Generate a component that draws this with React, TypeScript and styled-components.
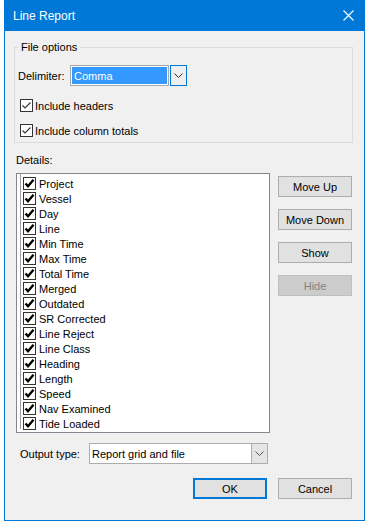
import React from 'react';
import styled, { createGlobalStyle } from 'styled-components';

const FONT = `"Liberation Sans", Arial, sans-serif`;

const Global = createGlobalStyle`
  html, body { margin: 0; padding: 0; background: #ffffff; }
  body { font-family: ${FONT}; font-size: 11px; color: #000; }
  * { box-sizing: border-box; }
`;

const Window = styled.div`
  margin-left: 4px;
  width: 361px;
  height: 521px;
  border: 1px solid #0078d7;
  border-top: none;
  background: #f0f0f0;
  display: flex;
  flex-direction: column;
`;

const TitleBar = styled.div`
  height: 31px;
  background: #0078d7;
  color: #fff;
  display: flex;
  align-items: center;
  justify-content: space-between;
  padding: 0 10px 0 8px;
  font-size: 12px;
  flex-shrink: 0;
`;

const Body = styled.div`
  display: flex;
  flex-direction: column;
  padding: 9px 11px 0 9px;
`;

const Group = styled.fieldset`
  margin: 0;
  border: 1px solid #dcdcdc;
  padding: 0 0 4px 3px;
  min-width: 0;
`;

const Legend = styled.legend`
  padding: 0 3px;
  line-height: 14px;
`;

const FieldRow = styled.div<{ $top: number; $indent?: number }>`
  display: flex;
  align-items: center;
  margin-top: ${(p) => p.$top}px;
  padding-left: ${(p) => p.$indent ?? 0}px;
`;

const Label = styled.span<{ $w: number }>`
  width: ${(p) => p.$w}px;
  flex-shrink: 0;
`;

const DelimCombo = styled.div`
  display: flex;
  height: 21px;
`;

const DelimField = styled.div`
  width: 99px;
  height: 21px;
  border: 1px solid #a8a8a8;
  background: #fff;
  padding: 1px;
`;

const Selection = styled.div`
  height: 100%;
  background: #3399ff;
  color: #fff;
  padding-left: 2px;
  display: flex;
  align-items: center;
`;

const DelimButton = styled.div`
  width: 17px;
  height: 21px;
  margin-left: 1px;
  border: 1px solid #0078d7;
  background: #eeeeee;
  display: flex;
  align-items: center;
  justify-content: center;
`;

const CheckRow = styled.label<{ $top: number }>`
  display: flex;
  align-items: center;
  gap: 2px;
  height: 15px;
  margin-top: ${(p) => p.$top}px;
  padding-left: 2px;
`;

const BoxWrap = styled.span`
  width: 13px;
  height: 13px;
  border: 1px solid #333;
  background: #fff;
  display: inline-flex;
  align-items: center;
  justify-content: center;
  flex-shrink: 0;
`;

const SectionLabel = styled.div`
  margin-top: 10px;
  padding-left: 2px;
  line-height: 14px;
`;

const DetailsRow = styled.div`
  display: flex;
  gap: 8px;
  margin-top: 6px;
  padding-left: 2px;
`;

const List = styled.div`
  width: 254px;
  height: 260px;
  border: 1px solid #828790;
  background: #fff;
  padding: 0 0 3px 3px;
`;

const ListInner = styled.div`
  height: 100%;
  border-left: 1px solid #a0a0a0;
  padding-top: 2px;
  padding-left: 2px;
`;

const Item = styled.div`
  height: 15px;
  display: flex;
  align-items: center;
  gap: 3px;
`;

const ButtonColumn = styled.div`
  display: flex;
  flex-direction: column;
  gap: 12px;
  padding-top: 3px;
`;

const Button = styled.div<{ $disabled?: boolean; $default?: boolean }>`
  width: 74px;
  height: 21px;
  display: flex;
  align-items: center;
  justify-content: center;
  background: ${(p) => (p.$disabled ? '#cccccc' : '#e1e1e1')};
  border: ${(p) => (p.$default ? '2px solid #0078d7' : p.$disabled ? '1px solid #bfbfbf' : '1px solid #adadad')};
  color: ${(p) => (p.$disabled ? '#838383' : '#000')};
`;

const OutCombo = styled.div`
  display: flex;
  width: 179px;
  height: 21px;
  border: 1px solid #adadad;
  background: #fff;
`;

const OutText = styled.div`
  flex: 1;
  display: flex;
  align-items: center;
  padding-left: 2px;
`;

const OutButton = styled.div`
  width: 16px;
  background: #e5e5e5;
  border-left: 1px solid #adadad;
  display: flex;
  align-items: center;
  justify-content: center;
`;

const Footer = styled.div`
  display: flex;
  justify-content: flex-end;
  gap: 11px;
  margin-top: 14px;
  padding-right: 1px;
`;

const Chevron = ({ color = '#333' }: { color?: string }) => (
  <svg width="9" height="5" viewBox="0 0 9 5">
    <path d="M0.5 0.5 L4.5 4.5 L8.5 0.5" fill="none" stroke={color} strokeWidth="1" />
  </svg>
);

const Close = () => (
  <svg width="11" height="11" viewBox="0 0 11 11">
    <path d="M0.5 0.5 L10.5 10.5 M10.5 0.5 L0.5 10.5" stroke="#fff" strokeWidth="1.1" />
  </svg>
);

const Check = ({ bold }: { bold?: boolean }) => (
  <BoxWrap>
    {bold ? (
      <svg width="11" height="11" viewBox="0 0 11 11">
        <path d="M1.5 5.5 L4 8.2 L9.5 1.8" fill="none" stroke="#000" strokeWidth="2.4" />
      </svg>
    ) : (
      <svg width="11" height="11" viewBox="0 0 11 11">
        <path d="M1.5 5.5 L4 8 L9.5 2.5" fill="none" stroke="#333" strokeWidth="1.1" />
      </svg>
    )}
  </BoxWrap>
);

const items = [
  'Project', 'Vessel', 'Day', 'Line', 'Min Time', 'Max Time', 'Total Time', 'Merged',
  'Outdated', 'SR Corrected', 'Line Reject', 'Line Class', 'Heading', 'Length', 'Speed',
  'Nav Examined', 'Tide Loaded',
];

export default function App() {
  return (
    <>
      <Global />
      <Window>
        <TitleBar>
          <span>Line Report</span>
          <Close />
        </TitleBar>
        <Body>
          <Group>
            <Legend>File options</Legend>
            <FieldRow $top={11}>
              <Label $w={52}>Delimiter:</Label>
              <DelimCombo>
                <DelimField>
                  <Selection>Comma</Selection>
                </DelimField>
                <DelimButton>
                  <Chevron />
                </DelimButton>
              </DelimCombo>
            </FieldRow>
            <CheckRow $top={12}>
              <Check />
              <span>Include headers</span>
            </CheckRow>
            <CheckRow $top={10}>
              <Check />
              <span>Include column totals</span>
            </CheckRow>
          </Group>
          <SectionLabel>Details:</SectionLabel>
          <DetailsRow>
            <List>
              <ListInner>
                {items.map((it) => (
                  <Item key={it}>
                    <Check bold />
                    <span>{it}</span>
                  </Item>
                ))}
              </ListInner>
            </List>
            <ButtonColumn>
              <Button>Move Up</Button>
              <Button>Move Down</Button>
              <Button>Show</Button>
              <Button $disabled>Hide</Button>
            </ButtonColumn>
          </DetailsRow>
          <FieldRow $top={10} $indent={6}>
            <Label $w={69}>Output type:</Label>
            <OutCombo>
              <OutText>Report grid and file</OutText>
              <OutButton>
                <Chevron color="#555" />
              </OutButton>
            </OutCombo>
          </FieldRow>
          <Footer>
            <Button $default>OK</Button>
            <Button>Cancel</Button>
          </Footer>
        </Body>
      </Window>
    </>
  );
}
